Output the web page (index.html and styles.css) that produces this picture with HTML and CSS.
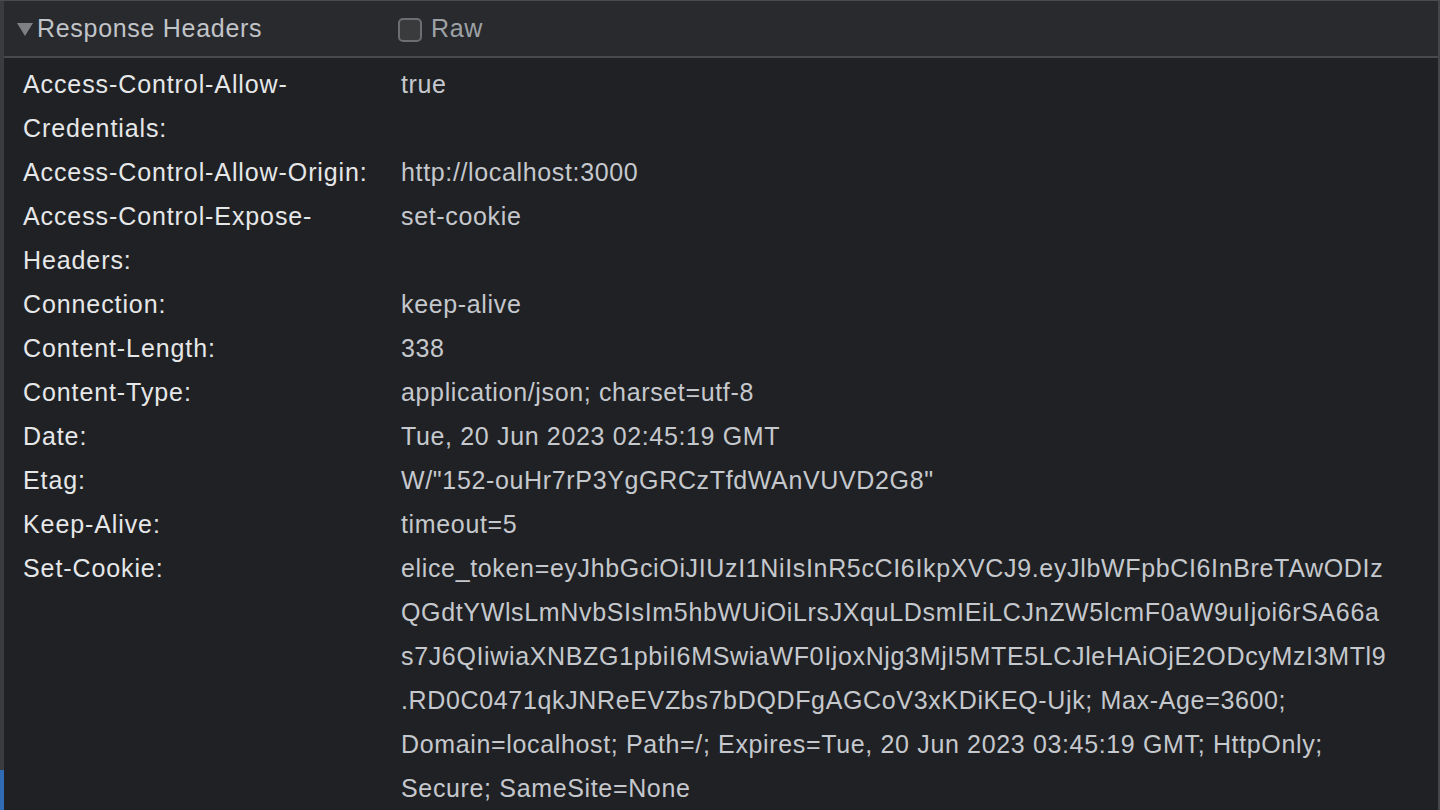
FILE: index.html
```html
<!DOCTYPE html>
<html>
<head>
<meta charset="utf-8">
<link rel="stylesheet" href="styles.css">
</head>
<body>
<div class="window">
  <div class="strip"><div class="strip-top"></div><div class="strip-active"></div></div>
  <div class="panel">
    <div class="section-header">
      <div class="title">
        <svg class="caret" width="16" height="13" viewBox="0 0 16 13"><path d="M0 0 H16 L8 13 Z" fill="#7f8083"/></svg>
        <span>Response Headers</span>
      </div>
      <span class="checkbox"></span>
      <span class="raw">Raw</span>
    </div>
    <div class="rows">
      <div class="row"><div class="key">Access-Control-Allow-Credentials:</div><div class="val">true</div></div>
      <div class="row"><div class="key">Access-Control-Allow-Origin:</div><div class="val">http://localhost:3000</div></div>
      <div class="row"><div class="key">Access-Control-Expose-Headers:</div><div class="val">set-cookie</div></div>
      <div class="row"><div class="key">Connection:</div><div class="val">keep-alive</div></div>
      <div class="row"><div class="key">Content-Length:</div><div class="val">338</div></div>
      <div class="row"><div class="key">Content-Type:</div><div class="val">application/json; charset=utf-8</div></div>
      <div class="row"><div class="key">Date:</div><div class="val">Tue, 20 Jun 2023 02:45:19 GMT</div></div>
      <div class="row"><div class="key">Etag:</div><div class="val">W/"152-ouHr7rP3YgGRCzTfdWAnVUVD2G8"</div></div>
      <div class="row"><div class="key">Keep-Alive:</div><div class="val">timeout=5</div></div>
      <div class="row"><div class="key">Set-Cookie:</div><div class="val">elice_token=eyJhbGciOiJIUzI1NiIsInR5cCI6IkpXVCJ9.eyJlbWFpbCI6InBreTAwODIzQGdtYWlsLmNvbSIsIm5hbWUiOiLrsJXquLDsmIEiLCJnZW5lcmF0aW9uIjoi6rSA66as7J6QIiwiaXNBZG1pbiI6MSwiaWF0IjoxNjg3MjI5MTE5LCJleHAiOjE2ODcyMzI3MTl9.RD0C0471qkJNReEVZbs7bDQDFgAGCoV3xKDiKEQ-Ujk; Max-Age=3600; Domain=localhost; Path=/; Expires=Tue, 20 Jun 2023 03:45:19 GMT; HttpOnly; Secure; SameSite=None</div></div>
    </div>
  </div>
</div>
</body>
</html>
```
FILE: styles.css
```css
html, body {
  margin: 0;
  padding: 0;
  background: #202124;
  height: 100%;
  overflow: hidden;
}
body {
  font-family: "Liberation Sans", Arial, Helvetica, sans-serif;
  font-size: 25px;
  letter-spacing: 0.9px;
}
.window {
  display: flex;
  height: 810px;
  border-top: 1px solid #4a4b4f;
  box-sizing: border-box;
}
.strip {
  width: 4px;
  flex: 0 0 4px;
  display: flex;
  flex-direction: column;
}
.strip-top {
  flex: 1;
  background: #3b3c3f;
}
.strip-active {
  height: 40px;
  background: #2f6cb5;
}
.panel {
  flex: 1;
  border-right: 2px solid #45464a;
  min-width: 0;
}
.section-header {
  height: 55px;
  background: #292a2d;
  border-bottom: 2px solid #48494d;
  display: flex;
  align-items: center;
  padding-left: 13px;
  box-sizing: content-box;
}
.title {
  width: 381px;
  display: flex;
  align-items: center;
  color: #c1c4c9;
  letter-spacing: 0.7px;
}
.caret {
  margin-right: 4px;
  margin-top: 1px;
}
.checkbox {
  width: 20px;
  height: 20px;
  border: 2px solid #6c6d70;
  border-radius: 5px;
  background: #3a3b3d;
  margin-top: 2px;
}
.raw {
  margin-left: 9px;
  color: #9ea2a7;
  letter-spacing: 0.7px;
}
.rows {
  padding: 4px 0 0 19px;
}
.row {
  display: grid;
  grid-template-columns: 378px 988px;
  line-height: 44px;
}
.key {
  color: #e6e7e9;
  padding-right: 8px;
}
.val {
  color: #c5c8cd;
  letter-spacing: 0.65px;
  overflow-wrap: anywhere;
}
```
